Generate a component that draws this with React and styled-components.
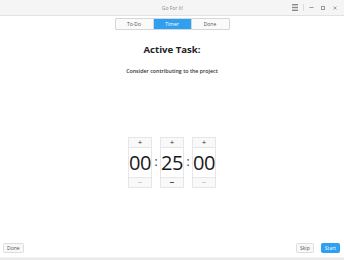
import React from "react";
import styled, { createGlobalStyle } from "styled-components";

const Global = createGlobalStyle`
  html, body { margin: 0; padding: 0; height: 100%; background: #ffffff; }
  #root { height: 100%; }
  * { box-sizing: border-box; }
  body { font-family: "Open Sans", "Noto Sans", sans-serif; }
`;

const Window = styled.div`
  height: 260px;
  display: flex;
  flex-direction: column;
  background: #ffffff;
`;

const TitleBar = styled.div`
  height: 16px;
  flex: none;
  background: #f5f5f5;
  border-bottom: 1px solid #e2e2e2;
  display: flex;
  align-items: center;
`;

const Title = styled.div`
  flex: 1;
  text-align: center;
  font-size: 5px;
  color: #8a8a8a;
  padding-left: 54px;
`;

const Controls = styled.div`
  display: flex;
  align-items: center;
  padding-right: 3px;
`;

const IconSlot = styled.div`
  width: ${(p) => p.$w || 12}px;
  display: flex;
  justify-content: center;
  align-items: center;
`;

const Sep = styled.div`
  width: 1px;
  height: 7px;
  background: #dcdcdc;
  margin: 0 1px 0 4px;
`;

const Tabs = styled.div`
  margin: 2px auto 0;
  display: flex;
  border: 1px solid #d6d6d6;
  border-radius: 1px;
  height: 12px;
  width: 115px;
`;

const Tab = styled.div`
  flex: 1;
  display: flex;
  align-items: center;
  justify-content: center;
  font-size: 5px;
  color: ${(p) => (p.$active ? "#ffffff" : "#555555")};
  background: ${(p) => (p.$active ? "#2f9ff2" : "#fafafa")};
  border-left: ${(p) => (p.$first ? "none" : "1px solid #d6d6d6")};
`;

const Heading = styled.div`
  margin-top: 14px;
  text-align: center;
  font-size: 9.6px;
  line-height: 12px;
  font-weight: 700;
  color: #222;
`;

const Task = styled.div`
  margin-top: 11px;
  text-align: center;
  font-size: 5.3px;
  line-height: 8px;
  font-weight: 600;
  color: #333;
`;

const TimerArea = styled.div`
  flex: 1;
  display: flex;
  align-items: center;
  justify-content: center;
  padding-top: 8px;
`;

const Spinner = styled.div`
  width: 24px;
  display: flex;
  flex-direction: column;
  border: 1px solid #e6e6e6;
`;

const StepButton = styled.div`
  height: 10px;
  display: flex;
  align-items: center;
  justify-content: center;
  background: #f9f9f9;
  font-size: 8px;
  line-height: 8px;
  color: ${(p) => (p.$dim ? "#aaaaaa" : "#333333")};
  font-weight: ${(p) => (p.$bold ? 700 : 400)};
  border-${(p) => (p.$top ? "bottom" : "top")}: 1px solid #e6e6e6;
`;

const Digits = styled.div`
  height: 29px;
  display: flex;
  align-items: center;
  justify-content: center;
  font-size: 20px;
  color: #1a1a1a;
  letter-spacing: -0.5px;
`;

const Colon = styled.div`
  width: 8px;
  text-align: center;
  font-size: 12px;
  color: #333;
  padding-bottom: 2px;
`;

const BottomBar = styled.div`
  display: flex;
  align-items: center;
  padding: 0 4px 3px 3px;
  height: 16px;
  flex: none;
`;

const Spacer = styled.div`
  flex: 1;
`;

const Button = styled.div`
  height: 10px;
  padding: 0 3px;
  display: flex;
  align-items: center;
  justify-content: center;
  font-size: 5px;
  border-radius: 1.5px;
  color: ${(p) => (p.$primary ? "#ffffff" : "#555555")};
  background: ${(p) => (p.$primary ? "#2f9ff2" : "#f8f8f8")};
  border: 1px solid ${(p) => (p.$primary ? "#2f9ff2" : "#dddddd")};
  margin-left: ${(p) => p.$ml || 0}px;
  min-width: ${(p) => p.$w || 0}px;
`;

const Footer = styled.div`
  height: 3px;
  flex: none;
  background: #ebebeb;
  border-top: 1px solid #f3f3f3;
`;

const Spin = ({ value, boldMinus }) => (
  <Spinner>
    <StepButton $top>+</StepButton>
    <Digits>{value}</Digits>
    <StepButton $dim={!boldMinus} $bold={boldMinus}>−</StepButton>
  </Spinner>
);

export default function App() {
  return (
    <>
      <Global />
      <Window>
        <TitleBar>
          <Title>Go For It!</Title>
          <Controls>
            <IconSlot $w={8}>
              <svg width="6" height="7" viewBox="0 0 6 7">
                <rect x="0" y="0" width="6" height="1.4" fill="#8a8a8a" />
                <rect x="0" y="2.8" width="6" height="1.4" fill="#8a8a8a" />
                <rect x="0" y="5.6" width="6" height="1.4" fill="#8a8a8a" />
              </svg>
            </IconSlot>
            <Sep />
            <IconSlot>
              <svg width="5" height="5" viewBox="0 0 5 5">
                <rect x="0.5" y="2" width="4" height="1" fill="#999" />
              </svg>
            </IconSlot>
            <IconSlot>
              <svg width="4" height="4" viewBox="0 0 4 4">
                <rect x="0.5" y="0.5" width="3" height="3" fill="none" stroke="#999" strokeWidth="1" />
              </svg>
            </IconSlot>
            <IconSlot>
              <svg width="4" height="4" viewBox="0 0 4 4">
                <path d="M0.5 0.5 L3.5 3.5 M3.5 0.5 L0.5 3.5" stroke="#999" strokeWidth="0.9" />
              </svg>
            </IconSlot>
          </Controls>
        </TitleBar>
        <Tabs>
          <Tab $first>To-Do</Tab>
          <Tab $active>Timer</Tab>
          <Tab>Done</Tab>
        </Tabs>
        <Heading>Active Task:</Heading>
        <Task>Consider contributing to the project</Task>
        <TimerArea>
          <Spin value="00" />
          <Colon>:</Colon>
          <Spin value="25" boldMinus />
          <Colon>:</Colon>
          <Spin value="00" />
        </TimerArea>
        <BottomBar>
          <Button $w={20}>Done</Button>
          <Spacer />
          <Button $w={18}>Skip</Button>
          <Button $primary $w={18} $ml={7}>Start</Button>
        </BottomBar>
        <Footer />
      </Window>
    </>
  );
}
